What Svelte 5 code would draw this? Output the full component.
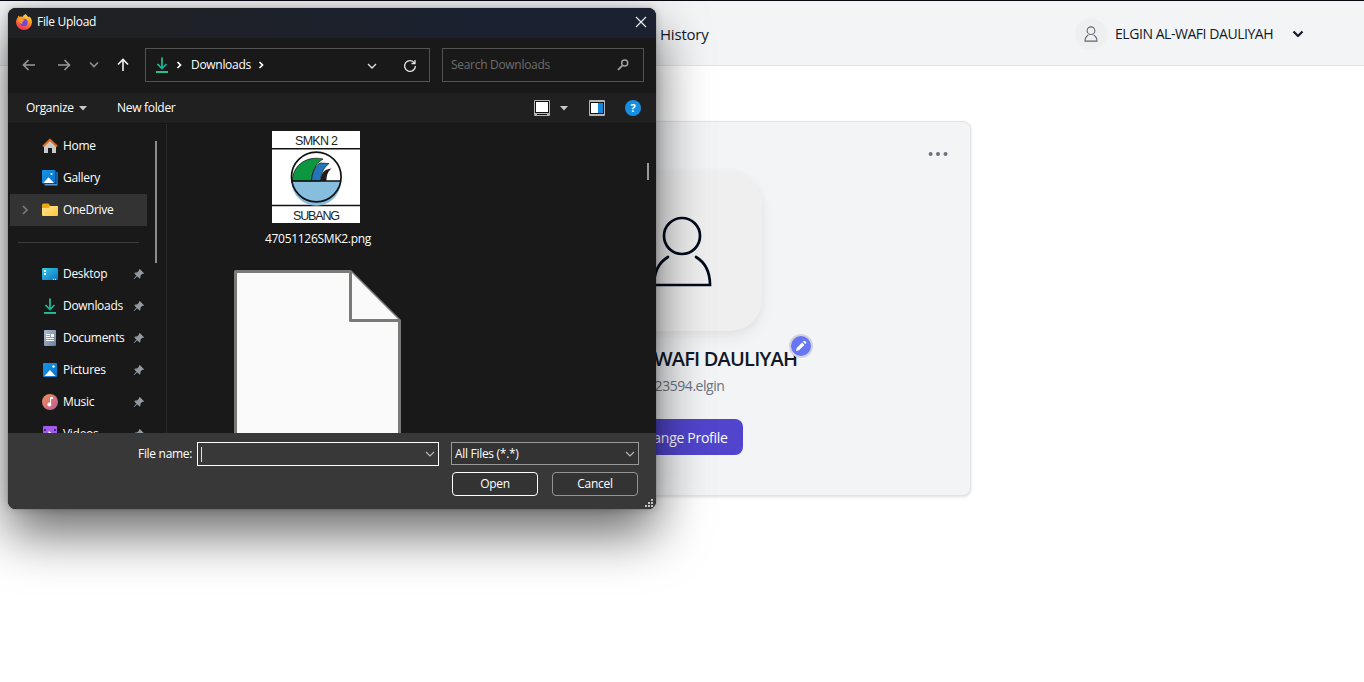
<script>
  const places = [
    { name: 'Home', icon: 'home' },
    { name: 'Gallery', icon: 'gallery' },
    { name: 'OneDrive', icon: 'folder', selected: true }
  ];
  const pinned = [
    { name: 'Desktop', icon: 'desktop' },
    { name: 'Downloads', icon: 'download' },
    { name: 'Documents', icon: 'document' },
    { name: 'Pictures', icon: 'picture' },
    { name: 'Music', icon: 'music' },
    { name: 'Videos', icon: 'video' }
  ];
</script>

{#snippet icon(kind)}
  <svg class="ico" width="16" height="16" viewBox="0 0 16 16">
    {#if kind === 'home'}
      <path d="M2 7.5 8 2l6 5.500V15h-4v-5H6v5H2z" fill="#c9c9c9" />
      <path d="M.9 8.500 8 1.700l7.100 6.800" fill="none" stroke="#e0681c" stroke-width="2.100" stroke-linejoin="round" />
    {:else if kind === 'gallery'}
      <path d="M14 2h1.500v13.500H2.500V14H14z" fill="#5996d6" />
      <path d="M14 2h1.500v12H14z" fill="#1260ac" />
      <rect width="13.500" height="13.500" rx="1" fill="url(#blue)" />
      <path d="M1.200 13 6.500 7.200 12 13z" fill="#fff" />
      <circle cx="9.500" cy="4" r="1" fill="#fff" />
    {:else if kind === 'folder'}
      <path d="M0 3q0-1.500 1.500-1.500h5L8.300 4H16v8H0z" fill="#eea810" />
      <path d="M0 6h6.500L8.500 4H15q1 0 1 1v8q0 1-1 1H1q-1 0-1-1z" fill="url(#yellow)" />
    {:else if kind === 'desktop'}
      <rect y="2" width="16" height="12" rx="1" fill="url(#cyan)" />
      <path d="M2 4h2v2H2zM2 7h2v2H2zM11 12.800h1v1h-1zM13 12.800h1v1h-1z" fill="#fff" />
    {:else if kind === 'download'}
      <path d="M8 .5v10.700M3.500 7 8 11.500 12.500 7" fill="none" stroke="url(#green)" stroke-width="1.700" />
      <path d="M2 14h12v1.900H2z" fill="#29bd8f" />
    {:else if kind === 'document'}
      <rect x="2" width="12" height="16" rx="1" fill="url(#slate)" />
      <path d="M4 4.500h4M4 6.500h4M4 8.500h8M4 10.500h8" stroke="#fff" />
      <path d="M9 4h3v3H9z" fill="#fff" />
    {:else if kind === 'picture'}
      <rect x="1" y="1" width="14" height="14" rx="1" fill="url(#blue)" />
      <path d="M2.500 14 8 8l5.500 6z" fill="#fff" />
      <circle cx="11.500" cy="4.500" r="1.200" fill="#fff" />
    {:else if kind === 'music'}
      <circle cx="8" cy="8" r="8" fill="url(#coral)" />
      <path d="M8 3h3v2H9v5.500H8z" fill="#fff" />
      <circle cx="7.300" cy="10.600" r="2" fill="#fff" />
    {:else if kind === 'video'}
      <rect x="1" y="0" width="14" height="15" rx="1" fill="#a45cec" />
      <path d="M2 3h2v2H2zM12 3h2v2h-2z" fill="#4b2488" />
      <path d="M6.500 5v6l4.500-3z" fill="#fff" />
    {/if}
  </svg>
{/snippet}

{#snippet person()}
  <circle cx="32" cy="22" r="18" />
  <path d="M18 43C8 49 4 58 4 71H60C60 58 56 49 46 43" stroke-linecap="round" />
{/snippet}

{#snippet row(item, pin)}
  <li class:selected={item.selected}>
    <span class="expander">
      {#if item.selected}
        <svg width="8" height="10" viewBox="0 0 8 10"><path d="M2 1l4 4-4 4" fill="none" stroke="#7b7b7b" stroke-width="1.600" /></svg>
      {/if}
    </span>
    {@render icon(item.icon)}
    <span class="label">{item.name}</span>
    {#if pin}
      <svg class="pin" width="12" height="12" viewBox="0 0 12 12">
        <path d="M6.800 1 11 5.200l-.8.700-.8-.1-2 2 .1 1.800-1 .9-2.300-2.300-3 2.800-.5-.5L3.500 7.600 1.300 5.400l.9-.9 1.800.1 2.100-2-.1-.9z" fill="#919ba4" />
      </svg>
    {/if}
  </li>
{/snippet}

<svg class="defs" width="0" height="0">
  <defs>
    <linearGradient id="blue" x2="1" y2="1"><stop stop-color="#1496e6" /><stop offset="1" stop-color="#0872c8" /></linearGradient>
    <linearGradient id="yellow" x2="1" y2="1"><stop stop-color="#ffe592" /><stop offset="1" stop-color="#ffc63d" /></linearGradient>
    <linearGradient id="cyan" x2="1" y2="1"><stop stop-color="#35cde2" /><stop offset="1" stop-color="#0c6fc9" /></linearGradient>
    <linearGradient id="green" x1="3" y1="0" x2="13" y2="11" gradientUnits="userSpaceOnUse"><stop stop-color="#35d495" /><stop offset="1" stop-color="#13a5a0" /></linearGradient>
    <linearGradient id="slate" x2="1" y2="1"><stop stop-color="#a9bfd4" /><stop offset="1" stop-color="#68819b" /></linearGradient>
    <linearGradient id="coral" x2="1" y2="1"><stop stop-color="#f29055" /><stop offset="1" stop-color="#b65a9a" /></linearGradient>
    <linearGradient id="fox" x1=".7" y1="0" x2=".3" y2="1"><stop stop-color="#ffe33d" /><stop offset=".45" stop-color="#ff8a1e" /><stop offset="1" stop-color="#f5265c" /></linearGradient>
  </defs>
</svg>

<div class="page">
  <header>
    <nav><a class="history" href="#history">History</a></nav>
    <div class="user">
      <span class="mini"><svg width="14" height="16" viewBox="0 0 64 75" fill="none" stroke="#5d6675" stroke-width="5">{@render person()}</svg></span>
      <span class="username">ELGIN AL-WAFI DAULIYAH</span>
      <svg width="12" height="8" viewBox="0 0 12 8"><path d="M1.500 1.500 6 6l4.500-4.500" fill="none" stroke="#151b2b" stroke-width="2.200" stroke-linejoin="round" /></svg>
    </div>
  </header>

  <main>
    <section class="card">
      <svg class="dots" width="20" height="6" viewBox="0 0 20 6" fill="#6b7280"><circle cx="2.600" cy="3" r="2" /><circle cx="10" cy="3" r="2" /><circle cx="17.500" cy="3" r="2" /></svg>
      <div class="avatar"><svg width="64" height="75" viewBox="0 0 64 75" fill="none" stroke="#020b1d" stroke-width="2.700">{@render person()}</svg></div>
      <h1>
        <span class="fullname">ELGIN AL-WAFI DAULIYAH</span>
        <span class="edit"><svg width="12" height="12" viewBox="0 0 12 12" fill="#fff"><path d="M1 11l.7-3L7.100 2.600l2.300 2.300L4 10.300z" /><path d="M7.900 1.800 8.800.9q.6-.5 1.200 0l1.100 1.100q.5.600 0 1.200l-.9.9z" /></svg></span>
      </h1>
      <p class="handle">2223594.elgin</p>
      <button class="change">Change Profile</button>
    </section>
  </main>
</div>

<div class="dialog">
  <div class="titlebar">
    <svg width="16" height="16" viewBox="0 0 16 16">
      <path d="M10 0c.3 1.600 2 2.300 3.200 3.600.2-.5.100-.9.100-1.400C15.300 4 16 6.400 16 8.300A8 7.700 0 0 1 0 8.300C0 5.900 1 4.300 1.800 3.400l.3-1.800 1.600 1.300C4.700 2.200 6 2.500 6.500 3 7.500 1 8.700.5 10 0z" fill="url(#fox)" />
      <circle cx="7.800" cy="8.500" r="3.800" fill="#7047d9" />
      <path d="M2.700 4.500c2-1.300 3.500-.6 4 .8l2.100.5-1.400 1.400C5.700 7.700 5.700 9.400 7 9.900 4 10.400 3 7.500 2.700 4.500z" fill="#ff9a28" />
    </svg>
    <span>File Upload</span>
    <svg class="close" width="12" height="12" viewBox="0 0 12 12"><path d="M1 1l10 10M11 1 1 11" stroke="#f1f1f1" stroke-width="1.100" /></svg>
  </div>

  <div class="navbar">
    <div class="arrows">
      <svg width="14" height="12" viewBox="0 0 14 12" stroke="#9a9a9a"><path d="M13 6H1.500M6.500 1l-5 5 5 5" /></svg>
      <svg width="14" height="12" viewBox="0 0 14 12" stroke="#9a9a9a"><path d="M1 6h11.500M7.500 1l5 5-5 5" /></svg>
      <svg width="10" height="8" viewBox="0 0 10 8" stroke="#8e8e8e"><path d="M1 1.500 5 5.500l4-4" /></svg>
      <svg width="12" height="14" viewBox="0 0 12 14" stroke="#f0f0f0"><path d="M6 13V1.500M1 6.500l5-5 5 5" /></svg>
    </div>
    <div class="address">
      {@render icon('download')}
      <svg class="crumb" width="6" height="8" viewBox="0 0 6 8"><path d="M1.500 1 4.500 4l-3 3" /></svg>
      <span class="place">Downloads</span>
      <svg class="crumb" width="6" height="8" viewBox="0 0 6 8"><path d="M1.500 1 4.500 4l-3 3" /></svg>
      <svg class="drop" width="10" height="6" viewBox="0 0 10 6"><path d="M1 1l4 4 4-4" /></svg>
      <svg class="reload" width="14" height="14" viewBox="0 0 14 14"><path d="M11.500 4A5.400 5.400 0 1 0 12.400 7M12 1v3.500H8.500" /></svg>
    </div>
    <div class="search">
      <span>Search Downloads</span>
      <svg width="12" height="12" viewBox="0 0 12 12" fill="none" stroke="#a2a2a2"><circle cx="7.700" cy="4" r="3" stroke-width="1.500" /><path d="M5.500 6.300 1 10.800" stroke-width="1.800" /></svg>
    </div>
  </div>

  <div class="toolbar">
    <span class="organize">Organize</span>
    <svg class="tri" width="8" height="5" viewBox="0 0 8 5"><path d="M0 0h8L4 4.500z" fill="#c9c9c9" /></svg>
    <span class="newfolder">New folder</span>
    <svg class="view" width="16" height="16" viewBox="0 0 16 16"><rect width="16" height="16" rx="1" fill="#b5b5b5" /><path d="M1 1h14v12H1zM3 14h10v1H3z" fill="#111" /><path d="M2 2h12v10H2z" fill="#fff" /></svg>
    <svg class="tri2" width="8" height="5" viewBox="0 0 8 5"><path d="M0 0h8L4 4.500z" fill="#c9c9c9" /></svg>
    <svg class="pane" width="16" height="16" viewBox="0 0 16 16"><rect width="16" height="16" rx="1" fill="#b5b5b5" /><path d="M1 2h14v12H1z" fill="#111" /><path d="M2 3h7v10H2z" fill="#fff" /><path d="M9 3h5v10H9z" fill="#1589df" /></svg>
    <span class="help">?</span>
  </div>

  <div class="body">
    <aside>
      <ul>
        {#each places as item}{@render row(item, false)}{/each}
        <li class="rule"></li>
        {#each pinned as item}{@render row(item, true)}{/each}
      </ul>
      <div class="sidethumb"></div>
    </aside>
    <div class="files">
      <figure>
        <svg class="thumb" width="88" height="92" viewBox="0 0 88 92">
          <rect width="88" height="92" fill="#fff" />
          <path d="M0 17.800h88M0 74.500h88" stroke="#111" stroke-width="1.600" />
          <text x="44.500" y="14" textLength="43">SMKN 2</text>
          <text x="44.500" y="88.500" textLength="47">SUBANG</text>
          <path d="M19.500 50h49.500a24.700 24.700 0 0 1-49.500 0z" fill="#87bddd" />
          <path d="M20.500 50C20 37 32 24 51 28 43 33 40 41 39.500 50z" fill="#0d9640" stroke="#111" stroke-width=".7" />
          <path d="M39.500 50C40 42 43 35 48 32l9 .5C51 37 49 43 48.500 50z" fill="#2474b9" stroke="#111" stroke-width=".7" />
          <path d="M48.500 50c.5-7 3-12 11-12.500C55 41 54.500 46 54.500 50z" fill="#21191c" />
          <path d="M20 50h48.500" stroke="#111" stroke-width="1.600" />
          <circle cx="44.300" cy="46" r="24.800" fill="none" stroke="#111" stroke-width="1.700" />
        </svg>
        <figcaption>47051126SMK2.png</figcaption>
      </figure>
      <svg class="sheet" width="168" height="220" viewBox="0 0 168 220" fill="#fafafa" stroke="#7a7b76" stroke-width="3" stroke-linejoin="round">
        <path d="M1.500 1.500H116.500L165.500 50.500V218H1.500z" /><path d="M116.500 1.500V50.500h49" />
      </svg>
      <div class="filethumb"></div>
    </div>
  </div>

  <div class="footer">
    <div class="fields">
      <span class="fn">File name:</span>
      <div class="input"><i></i><svg width="10" height="6" viewBox="0 0 10 6"><path d="M1 1l4 4 4-4" /></svg></div>
      <div class="select"><span>All Files (*.*)</span><svg width="10" height="6" viewBox="0 0 10 6"><path d="M1 1l4 4 4-4" /></svg></div>
    </div>
    <div class="actions"><button class="open">Open</button><button>Cancel</button></div>
    <svg class="grip" width="8" height="8" viewBox="0 0 8 8" fill="#c4c4c4"><path d="M6 0h2v2H6zM3 3h2v2H3zM6 3h2v2H6zM0 6h2v2H0zM3 6h2v2H3zM6 6h2v2H6z" /></svg>
  </div>
</div>

<style>
  :global(body) { background: #fff; overflow: hidden; }
  * { box-sizing: border-box; }
  svg { display: block; flex: none; }
  span { white-space: nowrap; }
  button { font: inherit; letter-spacing: inherit; padding: 0; }
  .defs { position: absolute; }
  .page { height: 682px; border-top: 1px solid #090710; font-family: "Open Sans", "Noto Sans", sans-serif; color: #111827; }
  header { height: 65px; background: #f3f4f6; border-bottom: 1px solid #e2e4e8; display: flex; align-items: center; justify-content: space-between; padding: 1px 60px 0 660px; }
  .history { color: inherit; text-decoration: none; font-size: 15px; letter-spacing: -.2px; }
  .user { display: flex; align-items: center; font-size: 14px; letter-spacing: -.45px; }
  .mini { width: 32px; height: 32px; border-radius: 50%; background: #efefef; display: grid; place-items: center; margin-right: 8px; }
  .username { width: 166px; margin-right: 11px; }
  main { display: flex; justify-content: center; padding-top: 55px; }
  .card { width: 578px; height: 375px; background: #f3f4f6; border: 1px solid #e2e4e7; border-radius: 8px; box-shadow: 0 1px 3px #0002; display: flex; flex-direction: column; align-items: center; margin-left: 0; }
  .dots { align-self: flex-end; margin: 29px 22px 14px 0; }
  .avatar { width: 160px; height: 160px; border-radius: 32px; background: #efefef; box-shadow: 0 8px 16px #0000000d, 0 2px 8px #0000000a; display: grid; place-items: center; padding-bottom: 0; }
  h1 { position: relative; margin: 13px 0 0; height: 30px; font-size: 20px; line-height: 30px; font-weight: 600; letter-spacing: -.8px; }
  .edit { position: absolute; right: -16px; top: -10px; width: 24px; height: 24px; border-radius: 50%; background: #6875f5; border: 2px solid #d1d5db; display: grid; place-items: center; }
  .handle { margin: 2px 0 0; font-size: 14px; line-height: 20px; color: #6b7280; letter-spacing: -.45px; }
  .change { width: 122px; height: 36px; margin-top: 23px; border: 0; border-radius: 8px; background: #5145cd; color: #fff; font-size: 14px; letter-spacing: -.3px; padding-top: 1px; }

  .dialog { position: absolute; left: 8px; top: 8px; width: 648px; height: 501px; border-radius: 8px; overflow: hidden; background: #191919; color: #fff; font-family: "Open Sans", "Noto Sans", sans-serif; font-size: 12px; line-height: 16px; letter-spacing: -.3px; box-shadow: 0 0 1px #0009, 0 0 8px #0003, 0 24px 52px #0009; }
  .titlebar { height: 30px; background: linear-gradient(100deg, #202124 15%, #1b2131 75%); display: flex; align-items: center; padding: 0 9px 2px 8px; gap: 5px; }
  .close { margin-left: auto; }
  .navbar { height: 55px; display: flex; padding: 10px 12px 0 14px; }
  .arrows { width: 123px; height: 34px; display: flex; align-items: center; gap: 21px; fill: none; stroke-width: 1.600; }
  .arrows svg:nth-child(3) { margin-left: -3px; margin-right: -3px; }
  .address { width: 285px; height: 34px; border: 1px solid #535353; display: flex; align-items: center; padding: 0 12px 0 8px; }
  .crumb { margin-left: 6px; fill: none; stroke: #fff; stroke-width: 1.700; }
  .place { width: 59px; margin: 0 2px 0 9px; }
  .drop { margin: 2px 26px 0 auto; }
  .reload { margin-top: 2px; }
  .drop, .reload { fill: none; stroke: #e2e2e2; stroke-width: 1.300; }
  .search { width: 202px; height: 34px; margin-left: 12px; border: 1px solid #535353; display: flex; align-items: center; justify-content: space-between; padding: 0 14px 0 8px; color: #6d6d6d; }
  .toolbar { height: 30px; background: #202020; display: flex; align-items: center; padding: 0 15px 0 18px; }
  .organize { width: 48px; }
  .tri { margin: 1px 30px 0 5px; }
  .view { margin-left: auto; }
  .tri2 { margin: 1px 21px 0 10px; }
  .help { margin-left: 20px; width: 16px; height: 16px; border-radius: 50%; background: #168fe2; text-align: center; font-weight: 700; font-size: 11px; }
  .body { height: 310px; display: flex; overflow: hidden; border-top: 1px solid #151515; }
  aside { width: 159px; height: 310px; border-right: 1px solid #2b2b2b; display: flex; padding: 6px 0 0 2px; }
  ul { list-style: none; width: 137px; margin: 0; padding: 0; }
  li { height: 32px; display: flex; align-items: center; padding-right: 2px; }
  .selected { background: #333; }
  .expander { width: 32px; padding-left: 11px; }
  .label { margin-left: 5px; }
  .pin { margin-left: auto; }
  li:has(.pin) { padding-right: 2px; }
  .rule::before { content: ""; width: 121px; height: 1px; margin-left: 8px; background: #3d3d3d; }
  .sidethumb { width: 2px; height: 122px; margin: 11px 0 0 8px; background: #8d8d8d; }
  .files { flex: 1; display: grid; grid-template-columns: 168px 1fr; grid-template-rows: 139px auto; padding: 7px 7px 0 67px; }
  figure { margin: 0; display: flex; flex-direction: column; align-items: center; }
  .thumb { margin-right: 5px; font-family: "Liberation Sans", sans-serif; font-size: 12.500px; letter-spacing: 0; text-anchor: middle; fill: #222; }
  figcaption { margin-top: 8px; }
  .sheet { grid-row: 2; grid-column: 1; }
  .filethumb { grid-row: 1; grid-column: 2; justify-self: end; width: 2px; height: 17px; margin-top: 32px; background: #9a9a9a; }
  .footer { height: 76px; background: #383838; padding-top: 9px; position: relative; }
  .fields { display: flex; padding-left: 130px; }
  .fn { width: 59px; padding-top: 4px; }
  .input { width: 242px; height: 24px; border: 1px solid #fff; display: flex; align-items: center; justify-content: space-between; padding: 0 3px; }
  .input i { width: 1px; height: 15px; background: #ddd; }
  .fields svg { fill: none; stroke: #b5b5b5; stroke-width: 1.200; }
  .select { width: 188px; height: 23px; margin-left: 12px; border: 1px solid #999; background: #333; display: flex; align-items: center; justify-content: space-between; padding: 0 3px; }
  .actions { display: flex; gap: 14px; padding-left: 444px; margin-top: 6px; }
  .actions button { width: 86px; height: 24px; border: 1px solid #949494; border-radius: 4px; background: #333; color: #fff; }
  .actions .open { border-color: #fff; }
  .grip { position: absolute; right: 3px; bottom: 2px; }
</style>
